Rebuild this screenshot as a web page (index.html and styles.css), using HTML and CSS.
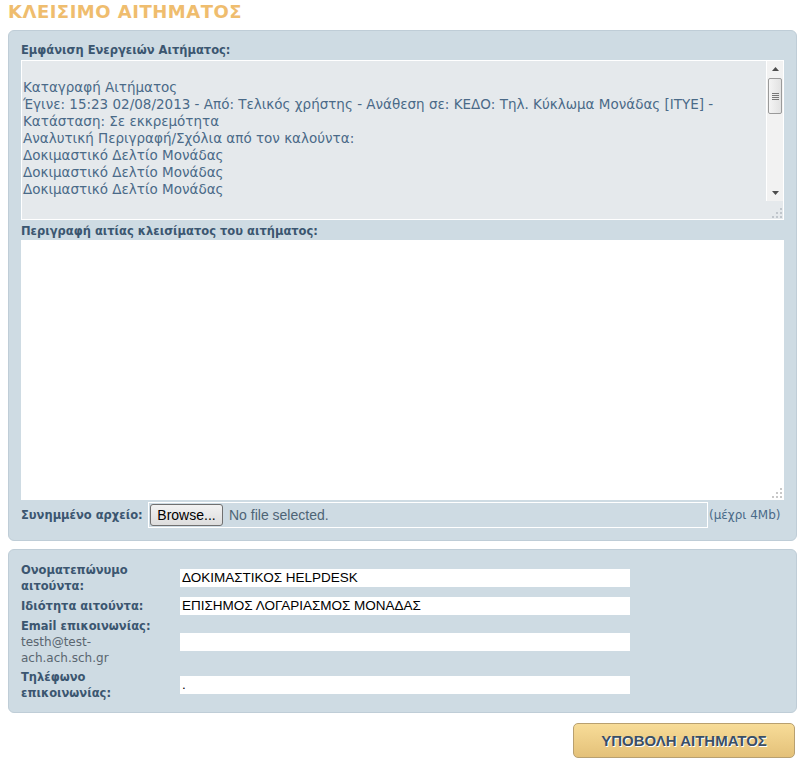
FILE: index.html
```html
<!DOCTYPE html>
<html lang="el">
<head>
<meta charset="utf-8">
<title>Κλείσιμο αιτήματος</title>
<link rel="stylesheet" href="styles.css">
</head>
<body>
<h1 class="page-title">ΚΛΕΙΣΙΜΟ ΑΙΤΗΜΑΤΟΣ</h1>

<div class="panel panel-main">
  <div class="field-label">Εμφάνιση Ενεργειών Αιτήματος:</div>
  <div class="history-box">
    <div class="history-text">
      <div class="line">&nbsp;</div>
      <div class="line">Καταγραφή Αιτήματος</div>
      <div class="line">Έγινε: 15:23 02/08/2013 - Από: Τελικός χρήστης - Ανάθεση σε: ΚΕΔΟ: Τηλ. Κύκλωμα Μονάδας [ΙΤΥΕ] -</div>
      <div class="line">Κατάσταση: Σε εκκρεμότητα</div>
      <div class="line">Αναλυτική Περιγραφή/Σχόλια από τον καλούντα:</div>
      <div class="line">Δοκιμαστικό Δελτίο Μονάδας</div>
      <div class="line">Δοκιμαστικό Δελτίο Μονάδας</div>
      <div class="line">Δοκιμαστικό Δελτίο Μονάδας</div>
    </div>
    <div class="scrollbar">
      <div class="sb-arrow">
        <svg width="7" height="4" viewBox="0 0 7 4"><path d="M0 4 L3.5 0 L7 4 Z" fill="#4d4d4d"/></svg>
      </div>
      <div class="sb-track">
        <div class="sb-thumb">
          <svg width="7" height="7" viewBox="0 0 7 7"><path d="M0 0.5 H7 M0 2.5 H7 M0 4.5 H7 M0 6.5 H7" stroke="#777" stroke-width="1"/></svg>
        </div>
      </div>
      <div class="sb-arrow">
        <svg width="7" height="4" viewBox="0 0 7 4"><path d="M0 0 L7 0 L3.5 4 Z" fill="#4d4d4d"/></svg>
      </div>
    </div>
    <svg class="grip" width="10" height="10" viewBox="0 0 10 10">
      <rect x="8" y="0" width="2" height="2" fill="#c0c6cc"/>
      <rect x="4" y="4" width="2" height="2" fill="#c0c6cc"/>
      <rect x="8" y="4" width="2" height="2" fill="#c0c6cc"/>
      <rect x="0" y="8" width="2" height="2" fill="#c0c6cc"/>
      <rect x="4" y="8" width="2" height="2" fill="#c0c6cc"/>
      <rect x="8" y="8" width="2" height="2" fill="#c0c6cc"/>
    </svg>
  </div>

  <div class="field-label label-reason">Περιγραφή αιτίας κλεισίματος του αιτήματος:</div>
  <div class="reason-box">
    <svg class="grip" width="10" height="10" viewBox="0 0 10 10">
      <rect x="8" y="0" width="2" height="2" fill="#c8c8c8"/>
      <rect x="4" y="4" width="2" height="2" fill="#c8c8c8"/>
      <rect x="8" y="4" width="2" height="2" fill="#c8c8c8"/>
      <rect x="0" y="8" width="2" height="2" fill="#c8c8c8"/>
      <rect x="4" y="8" width="2" height="2" fill="#c8c8c8"/>
      <rect x="8" y="8" width="2" height="2" fill="#c8c8c8"/>
    </svg>
  </div>

  <div class="file-row">
    <span class="file-label">Συνημμένο αρχείο:</span>
    <div class="file-input">
      <span class="browse-btn">Browse...</span>
      <span class="file-status">No file selected.</span>
    </div>
    <span class="file-note">(μέχρι 4Mb)</span>
  </div>
</div>

<div class="panel panel-info">
  <div class="info-grid">
    <div class="info-label">Ονοματεπώνυμο αιτούντα:</div>
    <div class="info-input">ΔΟΚΙΜΑΣΤΙΚΟΣ HELPDESK</div>

    <div class="info-label">Ιδιότητα αιτούντα:</div>
    <div class="info-input">ΕΠΙΣΗΜΟΣ ΛΟΓΑΡΙΑΣΜΟΣ ΜΟΝΑΔΑΣ</div>

    <div class="info-label">Email επικοινωνίας:<span class="info-sub">testh@test-ach.ach.sch.gr</span></div>
    <div class="info-input"></div>

    <div class="info-label">Τηλέφωνο επικοινωνίας:</div>
    <div class="info-input">.</div>
  </div>
</div>

<div class="actions">
  <button class="submit-btn" type="button">ΥΠΟΒΟΛΗ ΑΙΤΗΜΑΤΟΣ</button>
</div>
</body>
</html>
```

FILE: styles.css
```css
* { box-sizing: border-box; }

body {
  margin: 0;
  padding: 0 4px 0 8px;
  background: #ffffff;
  font-family: "DejaVu Sans", Verdana, sans-serif;
  font-size: 12px;
  color: #3b5670;
}

.page-title {
  margin: 0;
  height: 30px;
  padding-top: 1px;
  font-size: 18px;
  font-weight: bold;
  color: #efbd6e;
  line-height: 22px;
  letter-spacing: 0.5px;
}

.panel {
  width: 789px;
  background: #cedbe3;
  border: 1px solid #bfcdd7;
  border-radius: 6px;
}

.panel-main {
  padding: 10px 12px 12px 12px;
}

.field-label {
  font-weight: bold;
  font-size: 11.5px;
  line-height: 19px;
  color: #3b5670;
}

.label-reason {
  height: 20px;
  line-height: 17px;
  padding-top: 3px;
}

.history-box {
  position: relative;
  display: flex;
  height: 160px;
  background: #e5e9ec;
  border: 1px solid #ffffff;
}

.history-text {
  flex: 1;
  padding: 1px 0 0 1px;
  font-size: 13.5px;
  line-height: 17px;
  color: #4a6a88;
  white-space: nowrap;
  overflow: hidden;
}

.scrollbar {
  width: 17px;
  height: 140px;
  display: flex;
  flex-direction: column;
  background: #f2f2f2;
  border-left: 1px solid #ffffff;
}

.sb-arrow {
  height: 16px;
  display: flex;
  align-items: center;
  justify-content: center;
}

.sb-track {
  flex: 1;
  padding-top: 1px;
}

.sb-thumb {
  height: 36px;
  margin: 0 1px;
  border: 1px solid #9a9a9a;
  border-radius: 2px;
  background: linear-gradient(to right, #f4f4f4, #e2e2e2);
  display: flex;
  align-items: center;
  justify-content: center;
}

.grip {
  position: absolute;
  right: 1px;
  bottom: 1px;
}

.reason-box {
  position: relative;
  height: 260px;
  background: #ffffff;
  border: 1px solid #ffffff;
  margin-bottom: 2px;
}

.file-row {
  display: flex;
  align-items: center;
  height: 26px;
}

.file-label {
  font-weight: bold;
  font-size: 11.5px;
  width: 127px;
}

.file-input {
  width: 560px;
  height: 26px;
  border: 1px solid #ffffff;
  display: flex;
  align-items: center;
  padding-left: 1px;
}

.browse-btn {
  display: inline-block;
  width: 73px;
  height: 22px;
  border: 1px solid #707070;
  border-radius: 3px;
  background: linear-gradient(#f2f2f2, #dddddd);
  font-family: "Liberation Sans", Arial, sans-serif;
  font-size: 14px;
  line-height: 20px;
  color: #000;
  text-align: center;
}

.file-status {
  margin-left: 6px;
  font-family: "Liberation Sans", Arial, sans-serif;
  font-size: 14px;
  color: #4d6475;
}

.file-note {
  margin-left: 1px;
  font-size: 12px;
  color: #4a6a88;
}

.panel-info {
  margin-top: 8px;
  padding: 12px 12px 11px 12px;
}

.info-grid {
  display: grid;
  grid-template-columns: 159px 450px;
  row-gap: 3px;
  align-items: center;
}

.info-label {
  font-weight: bold;
  font-size: 11.5px;
  line-height: 16px;
  color: #3b5670;
  padding-right: 8px;
}

.info-sub {
  display: block;
  font-weight: normal;
  font-size: 12px;
  line-height: 16px;
  color: #5a6670;
}

.info-input {
  height: 18px;
  background: #ffffff;
  font-family: "Liberation Sans", Arial, sans-serif;
  font-size: 13.5px;
  line-height: 18px;
  color: #000;
  padding-left: 2px;
  white-space: nowrap;
}

.actions {
  display: flex;
  justify-content: flex-end;
  width: 789px;
  padding-top: 10px;
  padding-right: 2px;
}

.submit-btn {
  width: 222px;
  height: 35px;
  border: 1px solid #b8a070;
  border-radius: 5px;
  background: linear-gradient(#f7dc98, #e4c179);
  font-family: "Liberation Sans", Arial, sans-serif;
  font-size: 15px;
  font-weight: bold;
  color: #3a4f66;
  text-shadow: 1px 1px 0 #ffffff;
  cursor: pointer;
}
```
